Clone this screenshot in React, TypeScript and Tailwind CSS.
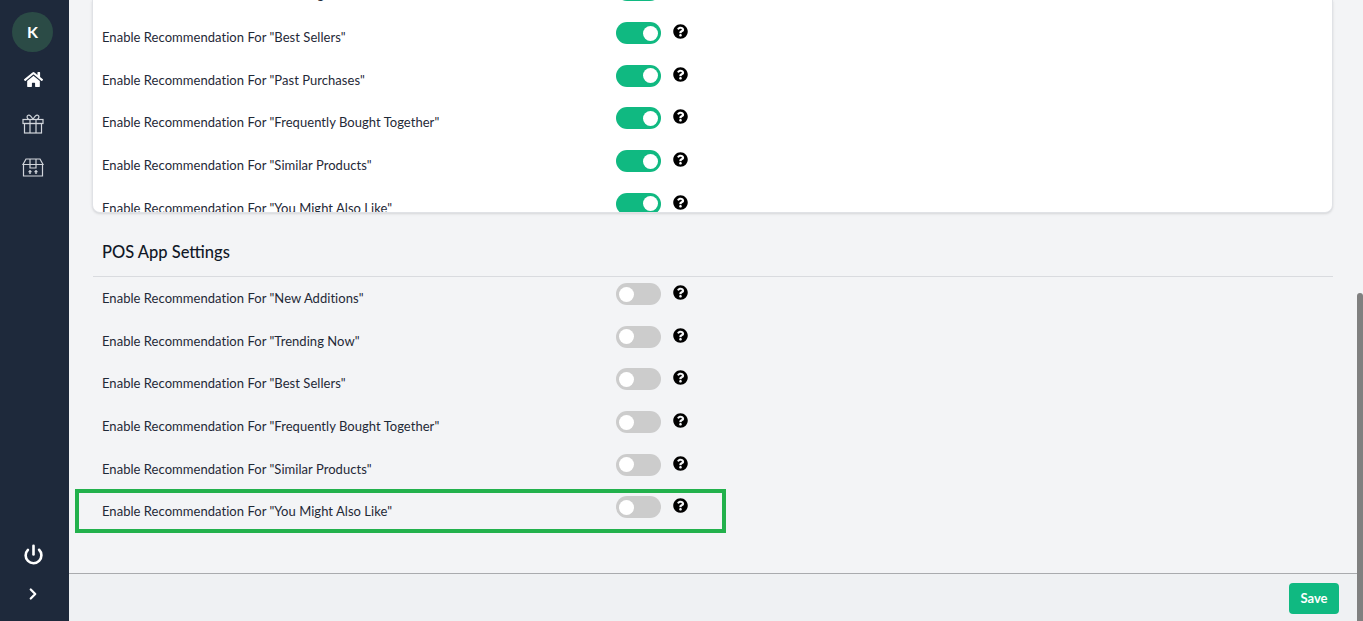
import { ChevronRight, Power } from 'lucide-react'
import { FaHome, FaQuestionCircle } from 'react-icons/fa'

const webRows = ['"Trending Now"', '"Best Sellers"', '"Past Purchases"', '"Frequently Bought Together"', '"Similar Products"', '"You Might Also Like"']
const posRows = ['"New Additions"', '"Trending Now"', '"Best Sellers"', '"Frequently Bought Together"', '"Similar Products"']

function GiftIcon() {
  return (
    <svg width="22" height="20" viewBox="0 0 22 20" fill="none" stroke="#d1d5db" strokeWidth="1.2">
      <rect x="1" y="5.5" width="20" height="4" />
      <rect x="2.5" y="9.5" width="17" height="9.5" />
      <path d="M8 5.5V19M14 5.5V19" />
      <path d="M11 5.5C9 1.5 7.5 .8 6.2 1.2 4.5 1.8 4.8 5 7 5.5M11 5.5C13 1.5 14.5 .8 15.8 1.2 17.5 1.8 17.2 5 15 5.5" />
    </svg>
  )
}

function StoreBoxIcon() {
  return (
    <svg width="22" height="20" viewBox="0 0 22 20" fill="none" stroke="#d1d5db" strokeWidth="1.2">
      <path d="M4 2H18L21 7.5H1L4 2Z" />
      <path d="M1.5 7.5V19H20.5V7.5" />
      <path d="M8 2V11H14V2" />
      <path d="M8 17V14M14 17V14" strokeWidth="1.4" />
      <path d="M6.5 15L8 13L9.5 15ZM12.5 15L14 13L15.5 15Z" fill="#d1d5db" strokeWidth="0.6" />
    </svg>
  )
}

function Toggle({ on }: { on: boolean }) {
  return (
    <div className={`w-[45px] h-[22px] rounded-full flex items-center px-[3px] ${on ? 'bg-[#10b981] justify-end' : 'bg-[#cccccc] justify-start'}`}>
      <div className="w-[15px] h-[15px] rounded-full bg-white" />
    </div>
  )
}

function Row({ label, on }: { label: string; on: boolean }) {
  return (
    <div className="flex h-[42.7px] shrink-0">
      <div className="w-[514px] pt-[6px] text-[13px] tracking-[0.04px] leading-[20px] text-[#1f2937]">Enable Recommendation For {label}</div>
      <div className="pt-px">
        <Toggle on={on} />
      </div>
      <FaQuestionCircle className="ml-[12px] mt-[3px] text-black" size={15} />
    </div>
  )
}

export default function App() {
  return (
    <div className="flex h-[621px] w-[1363px] overflow-hidden bg-[#f3f4f6] font-['Lato',sans-serif]">
      <aside className="w-[69px] shrink-0 bg-[#1e293b] flex flex-col items-center pt-[12px] pr-[3px]">
        <div className="w-[41px] h-[40px] mr-px rounded-full bg-[#2b4b46] flex items-center justify-center text-white text-[16px] font-bold">K</div>
        <FaHome className="mt-[18px] text-white" size={19} />
        <div className="mt-[25px]"><GiftIcon /></div>
        <div className="mt-[23px]"><StoreBoxIcon /></div>
        <div className="mt-auto flex flex-col items-center pb-[18px]">
          <Power className="ml-px text-white" size={21} strokeWidth={3} />
          <ChevronRight className="mt-[20px] text-white" size={18} strokeWidth={3} />
        </div>
      </aside>

      <div className="flex-1 flex flex-col min-w-0">
        <main className="h-[573px] shrink-0 overflow-hidden pl-[24px] pr-[24px]">
          <section className="h-[213px] -ml-px bg-white rounded-b-lg border border-t-0 border-[#e0e2e6] shadow-sm overflow-hidden pl-[9px]">
            <div className="flex flex-col -mt-[21.6px]">
              {webRows.map((label) => (
                <Row key={label} label={label} on />
              ))}
            </div>
          </section>
          <h2 className="ml-[9px] mt-[28px] text-[16.5px] leading-[22px] font-medium text-[#111827]">POS App Settings</h2>
          <div className="mt-[13px] border-t border-[#d9dbdf] pl-[9px] pt-[5px]">
            {posRows.map((label) => (
              <Row key={label} label={label} on={false} />
            ))}
          </div>
          <div className="relative ml-[9px]">
            <Row label={'"You Might Also Like"'} on={false} />
            <div className="absolute -left-[27px] -top-[6px] w-[651px] h-[44px] border-[4px] border-[#22b14c]" />
          </div>
        </main>
        <footer className="flex-1 border-t border-[#a9abae] bg-[#eff1f3] flex justify-end items-start pt-[9px] pr-[18px]">
          <button className="w-[50px] h-[31px] rounded bg-[#10b981] text-white text-[13px] font-bold">Save</button>
        </footer>
      </div>

      <div className="w-[6px] shrink-0 flex flex-col justify-end">
        <div className="h-[328px] bg-[#808080] rounded-t-sm" />
      </div>
    </div>
  )
}
